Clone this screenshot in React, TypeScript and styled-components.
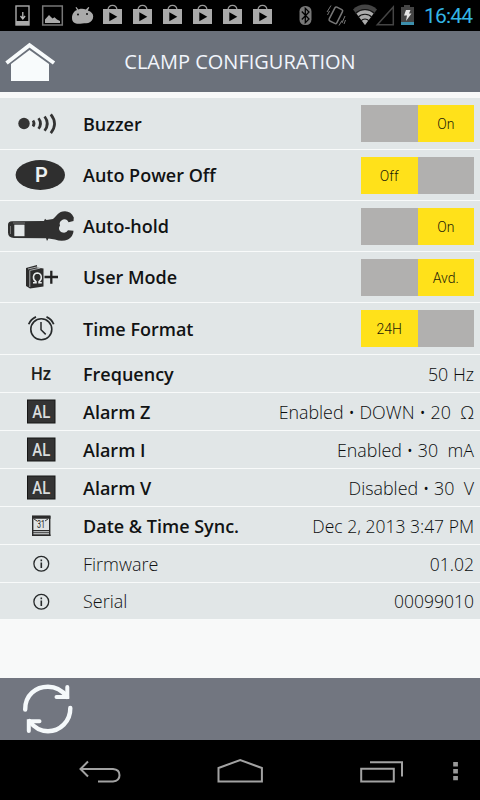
import React from "react";
import styled, { createGlobalStyle } from "styled-components";

const GlobalStyle = createGlobalStyle`
  body { margin: 0; background: #000; }
  svg { display: block; flex: none; }
`;

const Screen = styled.div`
  width: 480px;
  height: 800px;
  display: flex;
  flex-direction: column;
  overflow: hidden;
  background: #f8f9f9;
  font-family: "Open Sans", sans-serif;
`;

const StatusBar = styled.div`
  height: 31px;
  flex: none;
  display: flex;
  background: #000;
`;

const Clock = styled.div`
  width: 57px;
  padding-left: 1px;
  box-sizing: border-box;
  font: 400 21px/32px Roboto, sans-serif;
  letter-spacing: -0.8px;
  color: #33b5e5;
`;

const Header = styled.header`
  height: 61px;
  flex: none;
  display: grid;
  grid-template-columns: 60px 360px 60px;
  align-items: center;
  background: #6b717b;
`;

const Title = styled.h1`
  margin: 0;
  font-size: 20px;
  line-height: 28px;
  font-weight: 400;
  text-align: center;
  white-space: nowrap;
  color: #f1f5fc;
`;

const List = styled.main`
  flex: 1;
  padding-top: 6px;
`;

const Row = styled.div<{ $h: number }>`
  box-sizing: border-box;
  height: ${(p) => p.$h}px;
  display: flex;
  align-items: center;
  padding-right: 6px;
  background: #e1e6e7;
  border-bottom: 1px solid #f8fafa;
`;

const IconCell = styled.div`
  width: 83px;
  flex: none;
`;

const Label = styled.div<{ $light?: boolean }>`
  flex: 1;
  font-size: 18px;
  line-height: 24px;
  font-weight: ${(p) => (p.$light ? 300 : 600)};
  white-space: nowrap;
  color: #111314;
`;

const Value = styled.div<{ $numeric?: boolean }>`
  font-size: ${(p) => (p.$numeric ? 17.5 : 17.85)}px;
  line-height: 24px;
  font-weight: 300;
  white-space: pre;
  color: #0b0d0e;
`;

const Toggle = styled.div`
  width: 113px;
  height: 37px;
  display: grid;
  grid-template-columns: 56.5px 56.5px;
  grid-template-rows: 37px;
`;

const Segment = styled.div<{ $active: boolean }>`
  background: ${(p) => (p.$active ? "#ffe11a" : "#b1b0af")};
  color: #1d1b08;
  font: 300 14px/39px Roboto, sans-serif;
  text-align: center;
`;

const Footer = styled.footer`
  height: 62px;
  flex: none;
  background: #727680;
`;

const NavBar = styled.nav`
  height: 60px;
  flex: none;
  background: #000;
`;

const Bag = ({ x }: { x: number }) => (
  <g transform={`translate(${x} 0)`}>
    <path d="M5 9.500Q5.500 5.300 9.500 5.300T14 9.500" fill="none" stroke="#999" strokeWidth="1.300" />
    <path d="M0 9h19v15H0z" fill="#aaa" />
    <path d="M6.300 12.200v9l8-4.500z" fill="#000" />
  </g>
);

const StatusIcons = () => (
  <svg width="423" height="31" viewBox="0 0 423 31">
    <rect x="16" y="6" width="13" height="19" fill="none" stroke="#aaa" strokeWidth="1.400" />
    <path d="M16 21h13v4H16z" fill="#aaa" />
    <path d="M22.800 12v6M20.500 16l2.300 3 2.300-3" fill="none" stroke="#bbb" strokeWidth="1.300" />
    <rect x="42.700" y="6" width="19.600" height="19" fill="none" stroke="#777" strokeWidth="1.500" />
    <path d="M45 23v-3.500l4-4.500 3.500 3.500 2-1.300 2.500 2.300 3 1.500v2z" fill="#aaa" />
    <path d="M72 18c0-4 2-7 5-8l-1.500-2.500.9-.6 2 2.500c3-.8 5-.6 7.500 0l2.500-2.400.9.6-1.500 3c3.700 1 5.400 3.400 5.400 6 0 3-2 5.600-5 6.400-3 .6-5 0-8 .7-4 .6-8.200-.7-8.200-5.700z" fill="#aaa" />
    <circle cx="78" cy="14.500" r=".9" fill="#000" />
    <circle cx="87" cy="14" r=".9" fill="#000" />
    {[103, 133, 163, 193, 223, 253].map((x) => (
      <Bag key={x} x={x} />
    ))}
    <rect x="299.500" y="6" width="12" height="19" rx="5.500" fill="#777" />
    <path d="M301.800 11.500l7.200 7.500-3.700 3.700V8.300L309 12l-7.200 7.500" fill="none" stroke="#000" strokeWidth="1.300" />
    <rect x="331.500" y="7.500" width="8.500" height="15.500" rx="1.500" transform="rotate(27 335.700 15.500)" fill="none" stroke="#777" strokeWidth="1.500" />
    <path d="M327 12l4-6.500M327.500 15l2-4M342 23l3-7M339 25.500l3-5M344 24l1.500-4" stroke="#777" strokeWidth="1" />
    <path d="M353 9.500a17 17 0 0 1 24 0L365 25z" fill="#444" />
    <path d="M356.500 13.500a12.500 12.500 0 0 1 17 0L365 25z" fill="#aaa" />
    <path d="M355 14a13.500 13.500 0 0 1 20 0M358 17.300a9.600 9.600 0 0 1 14 0M361 20.800a5.500 5.500 0 0 1 8 0" fill="none" stroke="#111" strokeWidth="1.100" />
    <path d="M393.300 7v17.800h-16z" fill="none" stroke="#444" strokeWidth="1.500" />
    <path d="M401 7h3V5h6v2h4v18h-13z" fill="#444" />
    <path d="M401 22h13v3h-13z" fill="#3c8fad" />
    <path d="M406 10h4.500l-1.500 3.500h2.500l-5.500 7.500 1-5.500h-3z" fill="#e5e5e5" />
  </svg>
);

const HomeIcon = () => (
  <svg width="60" height="61" viewBox="0 0 60 61">
    <path d="M11 50V33L29.500 19 49 33v17z" fill="#f8fbfc" />
    <path d="M6.500 32L29.500 14.200 54 32" fill="none" stroke="#f8fbfc" strokeWidth="3.900" />
  </svg>
);

const BuzzerIcon = () => (
  <svg width="83" height="51" viewBox="0 0 83 51">
    <circle cx="24" cy="25.500" r="5.700" fill="#333" />
    <path d="M33 22.500q2.200 3 0 6M38.500 20.300q4 5.200 0 10.500M44.600 18.500q5.400 7 0 14.200M50.800 16.400q7.500 9.500 0 18.700" fill="none" stroke="#333" strokeWidth="2.700" />
  </svg>
);

const Glyph = styled.text`
  font-family: Roboto, sans-serif;
  text-anchor: middle;
`;

const PowerIcon = () => (
  <svg width="83" height="50" viewBox="0 0 83 50">
    <ellipse cx="40.300" cy="25" rx="24.700" ry="15" fill="#2f2f2f" />
    <Glyph x="41.500" y="32.300" fontSize="20" fontWeight="600" fill="#eceff0">P</Glyph>
  </svg>
);

const ClampIcon = () => (
  <svg width="83" height="50" viewBox="0 0 83 50">
    <path d="M8 24Q8 20.300 12 20.300L44 20 45 17.700 46.500 19 53 18C57 15 58 10.300 65 10.300Q71 10.300 73.800 16.500L73.500 20 68.500 21.300Q67 17.500 63 18.500 58.500 20.500 60 24.500 57.500 28 61 31 66 33 68 29.300L73.500 29.700Q73.500 35 68 38.500 62 41 55 38.500L48.500 37.500 47 40 46 37.300 14 37Q8 36.500 8 31.500z" fill="#303030" />
    <path d="M14.300 23.700h10.200v11.500H14.300z" fill="#e4e8e9" />
    <path d="M10.500 25v8M13 22h12" stroke="#888" strokeWidth=".8" />
  </svg>
);

const UserIcon = () => (
  <svg width="83" height="50" viewBox="0 0 83 50">
    <path d="M26 16l11-3v2.500l6.500 1V34.500L30 36.500 26 34z" fill="#2c2c2c" />
    <path d="M28 17l10-2.300M29.500 18.500l11-2.500M29.800 19v16" stroke="#c8cccd" strokeWidth=".8" fill="none" />
    <path d="M33 30.700h3v-1q-3-2-2.500-5.200Q34.200 21 37.500 21q3.500.4 3.800 4 .2 3-2.300 4.700v1h2.800" fill="none" stroke="#e8ebec" strokeWidth="1.500" />
    <path d="M44.500 25H58M51.300 18.800v13" stroke="#222" strokeWidth="2.300" />
  </svg>
);

const AlarmClockIcon = () => (
  <svg width="83" height="51" viewBox="0 0 83 51">
    <g fill="none" stroke="#26292a">
      <circle cx="41.300" cy="26.300" r="10.500" strokeWidth="1.600" />
      <path d="M41 19v7.700l4.700 4.700" strokeWidth="1.500" />
      <path d="M28.700 21.300q2-5.200 7.300-7.500M46.500 13.800q5.300 2.300 7.200 7.500" strokeWidth="1.800" />
    </g>
  </svg>
);

const HertzIcon = () => (
  <svg width="83" height="37" viewBox="0 0 83 37">
    <Glyph x="41" y="25" fontSize="19" fontWeight="500" textLength="20" lengthAdjust="spacingAndGlyphs" fill="#1d1f20">Hz</Glyph>
  </svg>
);

const AlarmIcon = () => (
  <svg width="83" height="37" viewBox="0 0 83 37">
    <rect x="27.500" y="7" width="27.500" height="23" fill="#343434" stroke="#161616" />
    <Glyph x="41.300" y="25" fontSize="18" fontWeight="500" textLength="18" lengthAdjust="spacingAndGlyphs" fill="#dadddd">AL</Glyph>
  </svg>
);

const CalendarIcon = () => (
  <svg width="83" height="37" viewBox="0 0 83 37">
    <rect x="32.700" y="9.300" width="17" height="19" fill="#dfe3e4" stroke="#2a2a2a" strokeWidth="1.400" />
    <path d="M32 8.700h18.500v3H32zM33 23h16v1.200H33zM33 25.300h16v1H33zM32 27.500h18.500V29H32z" fill="#2a2a2a" />
    <path d="M34 12l3 2M48 12l-3 2" stroke="#333" />
    <Glyph x="41" y="21.300" fontSize="10" textLength="8" lengthAdjust="spacingAndGlyphs" fill="#222">31</Glyph>
  </svg>
);

const InfoIcon = () => (
  <svg width="83" height="37" viewBox="0 0 83 37">
    <circle cx="41.300" cy="18.700" r="7.400" fill="none" stroke="#26292a" strokeWidth="1.300" />
    <path d="M40.500 14.500h1.600v1.700h-1.600zM40.500 17.500h1.600v5.500h-1.600z" fill="#26292a" />
  </svg>
);

const SyncIcon = () => (
  <svg width="100" height="62" viewBox="0 0 100 62">
    <g fill="none" stroke="#f5f9fb" strokeWidth="4.400" strokeLinecap="round">
      <path d="M25.200 31.500C25 17 36 8.800 48 8.800c8 0 14.500 4 19 10" />
      <path d="M56.500 19h10.800V9" strokeWidth="4" />
      <path d="M70.300 30C70.500 43.500 60 53.200 48 53.200c-8 0-14-4-18.500-10" />
      <path d="M39.500 43.200H28.800V53" strokeWidth="4" />
    </g>
  </svg>
);

const NavIcons = () => (
  <svg width="480" height="60" viewBox="0 0 480 60">
    <g fill="none" stroke="#a2a2a2" strokeWidth="2">
      <path d="M88 21.500L80.500 29l7.500 7.500M81 29h32q6.500.5 6.500 6.200t-6.500 6.200H98" />
      <path d="M218.500 41.500V28l21.700-8 21.700 8v13.500z" />
      <path d="M361.200 28.700h32.600v12.700h-32.600zM370 22.200h32v14.300" />
    </g>
    <path d="M453.200 22h4.700v4.500h-4.700zM453.200 29h4.700v4.500h-4.700zM453.200 36h4.700v4.300h-4.700z" fill="#999" />
  </svg>
);

interface RowData {
  label: string;
  icon: React.ReactNode;
  h: number;
  toggle?: [string, string];
  value?: string;
  light?: boolean;
  numeric?: boolean;
}

const rows: RowData[] = [
  { label: "Buzzer", icon: <BuzzerIcon />, h: 52, toggle: ["", "On"] },
  { label: "Auto Power Off", icon: <PowerIcon />, h: 51, toggle: ["Off", ""] },
  { label: "Auto-hold", icon: <ClampIcon />, h: 51, toggle: ["", "On"] },
  { label: "User Mode", icon: <UserIcon />, h: 51, toggle: ["", "Avd."] },
  { label: "Time Format", icon: <AlarmClockIcon />, h: 52, toggle: ["24H", ""] },
  { label: "Frequency", icon: <HertzIcon />, h: 38, value: "50 Hz" },
  { label: "Alarm Z", icon: <AlarmIcon />, h: 38, value: "Enabled • DOWN • 20  Ω" },
  { label: "Alarm I", icon: <AlarmIcon />, h: 38, value: "Enabled • 30  mA" },
  { label: "Alarm V", icon: <AlarmIcon />, h: 38, value: "Disabled • 30  V" },
  { label: "Date & Time Sync.", icon: <CalendarIcon />, h: 38, value: "Dec 2, 2013 3:47 PM", numeric: true },
  { label: "Firmware", icon: <InfoIcon />, h: 38, value: "01.02", light: true, numeric: true },
  { label: "Serial", icon: <InfoIcon />, h: 37, value: "00099010", light: true, numeric: true },
];

export default function App() {
  return (
    <Screen>
      <GlobalStyle />
      <StatusBar>
        <StatusIcons />
        <Clock>16:44</Clock>
      </StatusBar>
      <Header>
        <HomeIcon />
        <Title>CLAMP CONFIGURATION</Title>
      </Header>
      <List>
        {rows.map((r) => (
          <Row key={r.label} $h={r.h}>
            <IconCell>{r.icon}</IconCell>
            <Label $light={r.light}>{r.label}</Label>
            {r.toggle && (
              <Toggle>
                {r.toggle.map((t, i) => (
                  <Segment key={i} $active={t !== ""}>{t}</Segment>
                ))}
              </Toggle>
            )}
            {r.value && <Value $numeric={r.numeric}>{r.value}</Value>}
          </Row>
        ))}
      </List>
      <Footer>
        <SyncIcon />
      </Footer>
      <NavBar>
        <NavIcons />
      </NavBar>
    </Screen>
  );
}
